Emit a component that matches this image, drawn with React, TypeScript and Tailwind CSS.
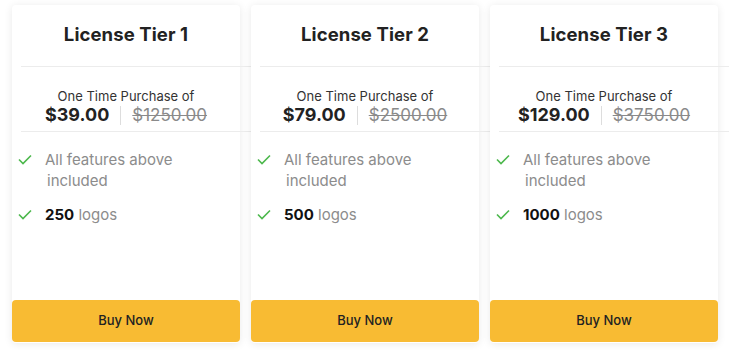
import React from "react";

const tiers = [
  { n: 1, price: "$39.00", old: "$1250.00", logos: "250" },
  { n: 2, price: "$79.00", old: "$2500.00", logos: "500" },
  { n: 3, price: "$129.00", old: "$3750.00", logos: "1000" },
];

function Check() {
  return (
    <svg width="14" height="11" viewBox="0 0 14 11" className="shrink-0">
      <path d="M1 5.5 L5 9.5 L13 1.5" fill="none" stroke="#4cb84c" strokeWidth="1.6" />
    </svg>
  );
}

export default function App() {
  return (
    <div
      className="w-[729px] h-[350px] bg-white flex gap-[11px] pl-[12px] pt-[5px]"
      style={{ fontFamily: "Inter, 'Noto Sans', sans-serif" }}
    >
      {tiers.map((t) => (
        <div
          key={t.n}
          className="w-[228px] h-[338px] bg-white rounded-[4px] flex flex-col shadow-[0_1px_8px_rgba(0,0,0,0.09)]"
        >
          <div className="h-[61px] pb-[2px] flex items-center justify-center text-[18.5px] font-bold text-[#222] tracking-[0.1px]">
            License Tier {t.n}
          </div>
          <div className="ml-[9px] w-[248px] h-px bg-[#ececec] shrink-0" />
          <div className="h-[64px] flex flex-col items-center pt-[21px]">
            <div className="text-[13px] leading-[16px] text-[#333]">One Time Purchase of</div>
            <div className="flex items-center">
              <span className="text-[18px] leading-[22px] font-bold text-[#222]">{t.price}</span>
              <span className="w-px h-[19px] bg-[#ddd] mx-[11px]" />
              <span className="text-[17px] leading-[22px] text-[#8a8a8a] line-through">{t.old}</span>
            </div>
          </div>
          <div className="ml-[9px] w-[248px] h-px bg-[#ececec] shrink-0" />
          <div className="pl-[6px] pt-[17px] flex flex-col gap-[13px]">
            <div className="flex items-start gap-[13px]">
              <div className="pt-[5px]"><Check /></div>
              <div className="text-[15px] leading-[21px] text-[#8c8c8c] w-[140px]">
                All features above <span className="pl-[2px]">included</span>
              </div>
            </div>
            <div className="flex items-start gap-[13px]">
              <div className="pt-[5px]"><Check /></div>
              <div className="text-[15px] leading-[21px] text-[#8c8c8c]">
                <span className="font-bold text-[#111]">{t.logos}</span> logos
              </div>
            </div>
          </div>
          <button className="mt-auto mb-[1px] h-[42px] w-full rounded-[4px] bg-[#f8bb33] text-[13px] font-medium text-[#222]">
            Buy Now
          </button>
        </div>
      ))}
    </div>
  );
}
